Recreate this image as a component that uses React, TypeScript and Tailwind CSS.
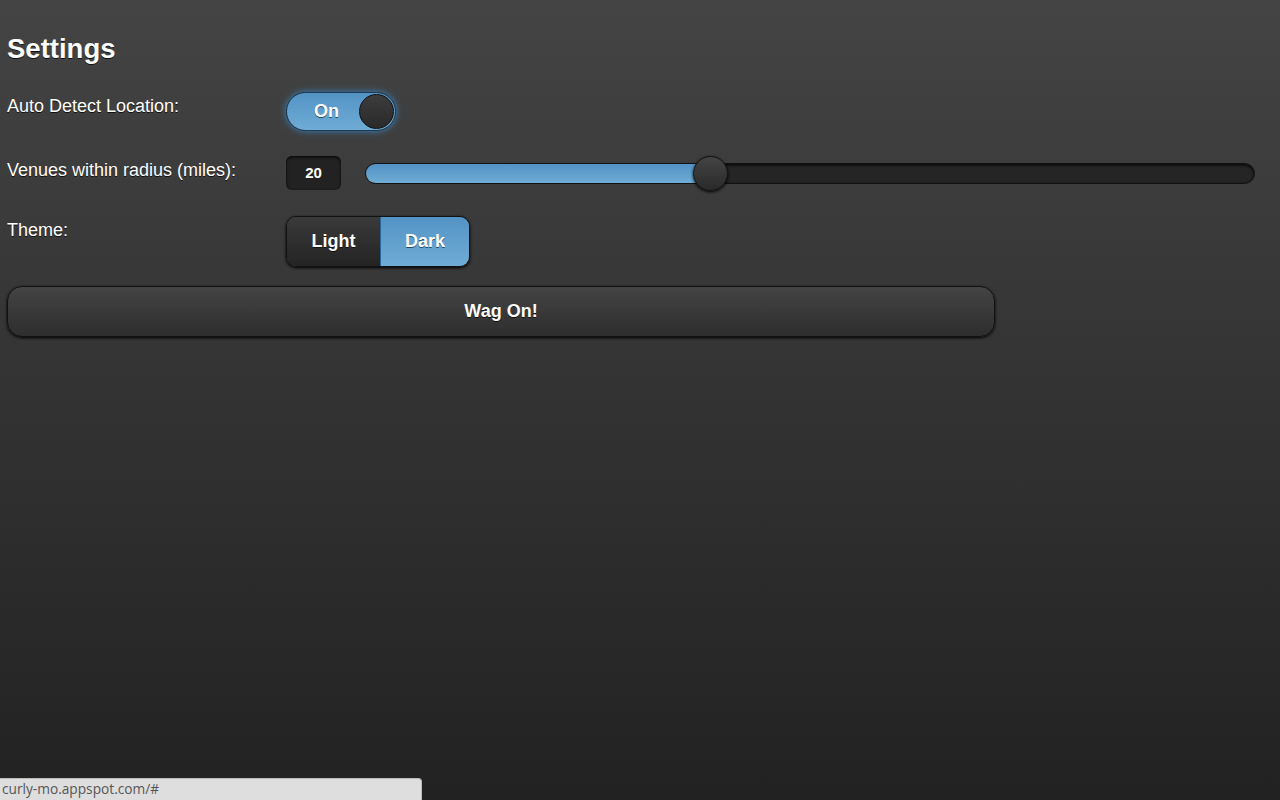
import React from "react";

const App = () => {
  return (
    <div className="relative h-[800px] w-[1280px] overflow-hidden bg-gradient-to-b from-[#444444] to-[#222222] font-['Liberation_Sans',Arial,sans-serif] text-white">
      <div className="px-[7px] pt-[33px]">
        <h1 className="text-[27.5px] font-bold leading-[32px] [text-shadow:0_1px_0_#111]">Settings</h1>

        <div className="mt-[27px] flex">
          <label className="w-[279px] pt-[1px] text-[18px] [text-shadow:0_1px_0_#111]">Auto Detect Location:</label>
          <div className="flex h-[39px] w-[110px] items-center justify-between rounded-full border border-[#1f3a52] bg-gradient-to-b from-[#5393c5] to-[#6facd5] pl-[27px] pr-[1px] shadow-[0_0_7px_#3a85c2]">
            <span className="text-[18px] font-bold [text-shadow:0_1px_0_#1e4a6e]">On</span>
            <div className="h-[35px] w-[35px] rounded-full border border-[#111] bg-gradient-to-b from-[#3c3c3c] to-[#2a2a2a]" />
          </div>
        </div>

        <div className="mt-[25px] flex items-center">
          <label className="w-[279px] pb-[5px] text-[18px] [text-shadow:0_1px_0_#111]">Venues within radius (miles):</label>
          <div className="flex h-[34px] w-[55px] items-center justify-center rounded-[6px] bg-[#222222] text-[15px] font-bold shadow-[inset_0_1px_3px_#000]">20</div>
          <div className="relative ml-[24px] h-[21px] flex-1 rounded-full border border-[#111] bg-[#252525] shadow-[inset_0_1px_3px_#000]">
            <div className="h-full w-[345px] rounded-full bg-gradient-to-b from-[#5393c5] to-[#6facd5]" />
            <div className="absolute left-[327px] top-[-8px] h-[35px] w-[35px] rounded-full border border-[#111] bg-gradient-to-b from-[#444] to-[#2a2a2a] shadow-[0_1px_3px_#000]" />
          </div>
          <div className="w-[18px]" />
        </div>

        <div className="mt-[26px] flex">
          <label className="w-[279px] pt-[1px] text-[18px] [text-shadow:0_1px_0_#111]">Theme:</label>
          <div className="flex h-[51px] overflow-hidden rounded-[10px] border border-[#111] shadow-[0_1px_3px_#000]">
            <div className="flex w-[93px] items-center justify-center bg-gradient-to-b from-[#3a3a3a] to-[#242424] text-[18px] font-bold [text-shadow:0_1px_0_#111]">Light</div>
            <div className="flex w-[89px] items-center justify-center border-l border-[#2a6496] bg-gradient-to-b from-[#5393c5] to-[#6facd5] text-[18px] font-bold [text-shadow:0_1px_0_#1e4a6e]">Dark</div>
          </div>
        </div>

        <button className="mt-[19px] flex h-[51px] w-[988px] items-center justify-center rounded-[15px] border border-[#111] bg-gradient-to-b from-[#444444] to-[#2e2e2e] text-[18px] font-bold shadow-[0_1px_3px_#000] [text-shadow:0_1px_0_#111]">
          Wag On!
        </button>
      </div>

      <div className="absolute bottom-0 left-0 flex h-[22px] w-[422px] items-center rounded-tr-[4px] border-t border-r border-[#bbb] bg-[#dedede] pl-[2px] font-['Open_Sans',sans-serif] text-[13.7px] text-[#555]">
        curly-mo.appspot.com/#
      </div>
    </div>
  );
};

export default App;
